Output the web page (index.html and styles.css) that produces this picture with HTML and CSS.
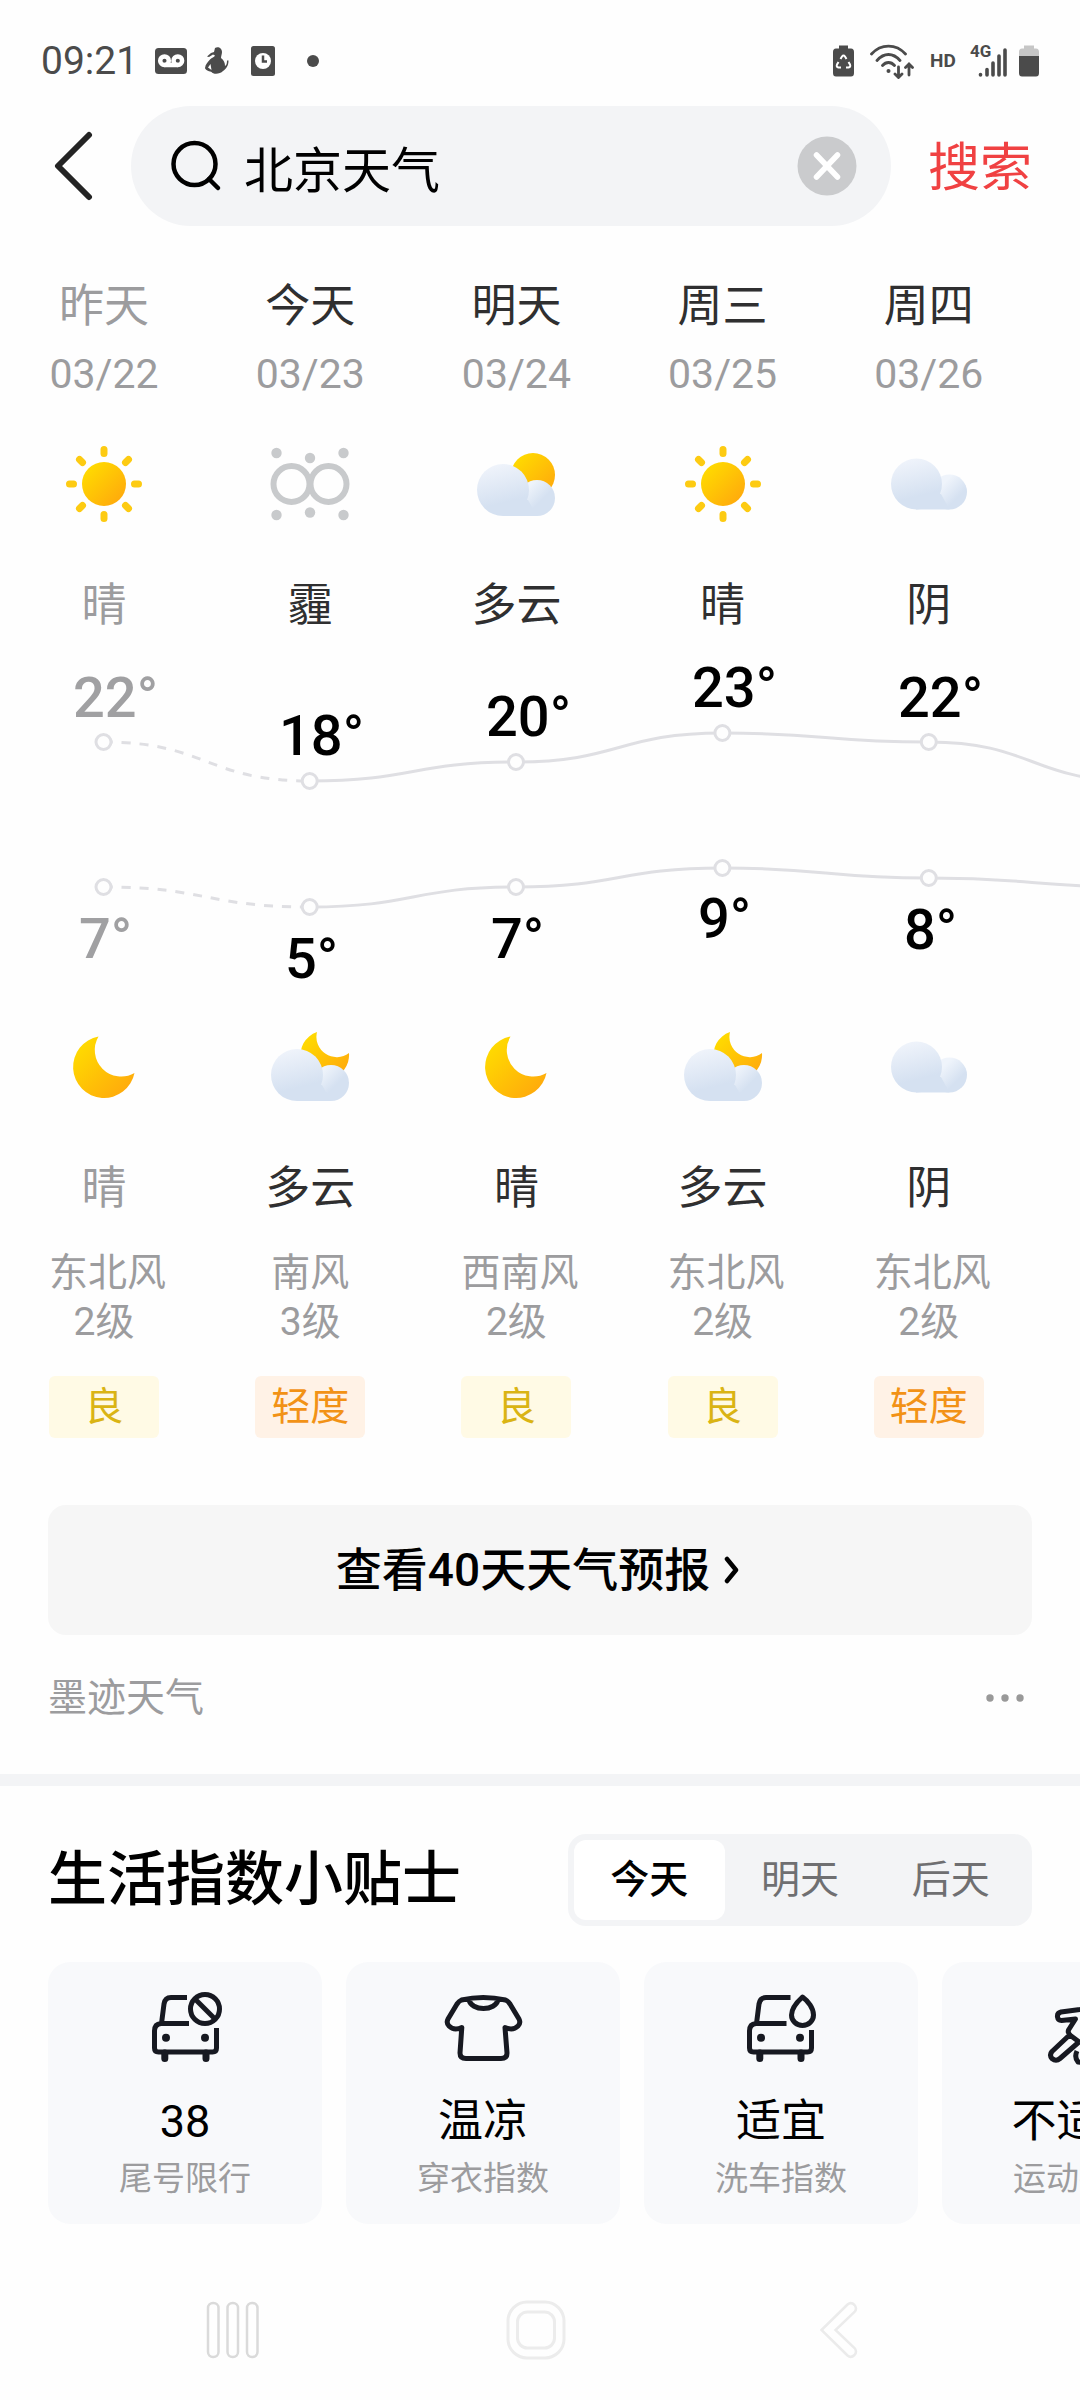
FILE: index.html
```html
<!DOCTYPE html>
<html lang="zh-CN">
<head>
<meta charset="utf-8">
<meta name="viewport" content="width=device-width, initial-scale=1">
<title>北京天气</title>
<link rel="stylesheet" href="styles.css">
</head>
<body>

<svg class="defs" aria-hidden="true">
  <defs>
    <linearGradient id="gold" x1="0" y1="0" x2="1" y2="1">
      <stop offset="0.1" stop-color="#ffdc00"/>
      <stop offset="0.95" stop-color="#ffa60d"/>
    </linearGradient>
    <linearGradient id="puff" x1="0.3" y1="0" x2="0.55" y2="1">
      <stop offset="0" stop-color="#f0f4fb"/>
      <stop offset="0.75" stop-color="#d5e1f1"/>
    </linearGradient>
    <linearGradient id="puff-small" gradientUnits="userSpaceOnUse" x1="52" y1="42" x2="66" y2="56">
      <stop offset="0" stop-color="#eff4fb"/>
      <stop offset="1" stop-color="#d5e1f1"/>
    </linearGradient>

    <symbol id="sun" viewBox="0 0 80 80">
      <circle cx="40" cy="40" r="22" fill="url(#gold)"/>
      <g stroke="#fdcb12" stroke-width="7" stroke-linecap="round">
        <path d="M40 5.500V9.500M40 70.500V74.500M5.500 40H9.500M70.500 40H74.500M15.500 15.500L18.500 18.500M61.500 61.500L64.500 64.500M64.500 15.500L61.500 18.500M18.500 61.500L15.500 64.500"/>
      </g>
    </symbol>

    <symbol id="haze" viewBox="0 0 80 80">
      <g fill="none" stroke="#c8cacc" stroke-width="6">
        <circle cx="21.500" cy="40" r="18"/>
        <circle cx="58.500" cy="40" r="18"/>
      </g>
      <g fill="#c8cacc">
        <circle cx="6.500" cy="9" r="5.200"/><circle cx="40" cy="14" r="5.200"/><circle cx="73.500" cy="9" r="5.200"/>
        <circle cx="6.500" cy="71" r="5.200"/><circle cx="40" cy="68.500" r="5.200"/><circle cx="73.500" cy="71" r="5.200"/>
      </g>
    </symbol>

    <symbol id="cloud" viewBox="0 0 80 80">
      <circle cx="60.500" cy="48" r="17.500" fill="url(#puff-small)"/>
      <path d="M27 50H52L60.500 65.500H27Z" fill="#d5e1f1"/>
      <circle cx="27.500" cy="40" r="25.500" fill="url(#puff)"/>
    </symbol>

    <symbol id="cloudy-puffs" viewBox="0 0 80 80">
      <circle cx="61" cy="54" r="18" fill="url(#puff-small)"/>
      <path d="M27 56H52L61 72H27Z" fill="#d5e1f1"/>
      <circle cx="27" cy="46" r="26" fill="url(#puff)"/>
    </symbol>

    <symbol id="cloudy-day" viewBox="0 0 80 80">
      <circle cx="57" cy="31" r="22" fill="url(#gold)"/>
      <use href="#cloudy-puffs" width="80" height="80"/>
    </symbol>

    <symbol id="moon" viewBox="0 0 80 80">
      <path d="M34.500 9.500A31 31 0 1 0 70.500 46A26.500 26.500 0 0 1 34.500 9.500Z" fill="url(#gold)"/>
    </symbol>

    <symbol id="cloudy-night" viewBox="0 0 80 80">
      <path d="M47 5A24.300 24.300 0 1 0 79 26A20.300 20.300 0 0 1 47 5Z" fill="url(#gold)"/>
      <use href="#cloudy-puffs" y="2" width="80" height="80"/>
    </symbol>
  </defs>
</svg>

<header class="status">
  <div class="status-left">
    <time class="clock">09:21</time>
    <svg class="status-icon" viewBox="0 0 32 32" aria-hidden="true">
      <rect x="0" y="3" width="32" height="26" rx="3.500" fill="#4b4b4b"/>
      <g fill="none" stroke="#fff" stroke-width="4.500"><circle cx="9.500" cy="15.700" r="4.300"/><circle cx="22.800" cy="15.700" r="4.300"/><path d="M9.500 20H22.800"/></g>
    </svg>
    <svg class="status-icon" viewBox="0 0 32 32" aria-hidden="true">
      <path d="M14 3C17 1 21 3 21 7C21 9 20 11 20 13C23 15 24 18 24 21C26 20 26 17 26 15.500H27.500C27.500 21 25 24 22 26C19 29.500 12 29.500 10.500 27C7 26 4 24.500 4 23C4.500 19 7 17 9 14.500C11 12.500 13 12.500 14 10.500L12 9.500L8 12L6 11.500L10 8L13 7ZM9.500 19L7 22.500L10.500 25Z" fill="#4b4b4b"/>
    </svg>
    <svg class="status-icon" viewBox="0 0 32 32" aria-hidden="true">
      <rect x="4" y="1" width="24" height="30" rx="2.500" fill="#4b4b4b"/>
      <circle cx="16" cy="16" r="8" fill="#fff"/><path d="M16 10.500V16.500H20" fill="none" stroke="#4b4b4b" stroke-width="2.500"/>
    </svg>
    <svg class="status-icon" viewBox="0 0 32 32" aria-hidden="true"><circle cx="20" cy="16" r="6" fill="#4b4b4b"/></svg>
  </div>
  <div class="status-right">
    <svg class="status-saver" viewBox="0 0 25 32" aria-hidden="true">
      <path d="M6 0.500H15V3.500H18Q21 3.500 21 7V28Q21 31.500 18 31.500H3Q0 31.500 0 28V7Q0 3.500 3 3.500H6Z" fill="#4b4b4b"/>
      <path d="M7.500 14L9 11.500Q10.500 9.500 12 11.500L13.500 14M15.500 17L17 19.500Q18 22 15.500 22.500H13M8 22.500H5.500Q3 22 4 19.500L5.500 17" fill="none" stroke="#fff" stroke-width="2"/>
    </svg>
    <svg class="status-wifi" viewBox="0 0 48 36" aria-hidden="true">
      <g fill="none" stroke="#4b4b4b" stroke-width="2.800" stroke-linecap="round">
        <path d="M1.500 11C11 0.500 26 0.500 35.500 11M7 17.500C14 9.500 23 9.500 30 17.500M12.500 22.500C16 18.500 21 18.500 24.500 22.500"/>
        <path d="M28.500 24V34M25 31L28.500 34.500L32 31M39 32V22M35.500 24.500L39 21L42.500 24.500"/>
      </g>
      <circle cx="18.500" cy="28" r="2" fill="#4b4b4b"/>
    </svg>
    <span class="status-hd">HD</span>
    <svg class="status-signal" viewBox="0 0 37 34" aria-label="4G">
      <text class="signal-label" x="0" y="13">4G</text>
      <path d="M10.500 31V30.500M17 31V25.500M23 31V19M29 31V12M35 31V6" stroke="#4b4b4b" stroke-width="3.600" stroke-linecap="round"/>
    </svg>
    <svg class="status-battery" viewBox="0 0 20 32" aria-hidden="true">
      <path d="M5 0.500H15V3.500H17Q20 3.500 20 7V11H0V7Q0 3.500 3 3.500H5Z" fill="#c6c6c6"/>
      <path d="M0 11H20V28Q20 31.500 17 31.500H3Q0 31.500 0 28Z" fill="#4b4b4b"/>
    </svg>
  </div>
</header>

<form class="search" role="search">
  <button class="back" type="button" aria-label="返回">
    <svg viewBox="0 0 40 72" width="40" height="72"><path d="M36 5L5 36L36 67" fill="none" stroke="#242424" stroke-width="6" stroke-linecap="round" stroke-linejoin="round"/></svg>
  </button>
  <div class="field">
    <svg viewBox="0 0 52 54" width="52" height="54" aria-hidden="true"><g fill="none" stroke="#000" stroke-width="4.500" stroke-linecap="round"><circle cx="24.500" cy="25" r="21"/><path d="M39 40L48 49"/></g></svg>
    <input class="query" type="text" value="北京天气" aria-label="搜索内容">
    <button class="clear" type="button" aria-label="清空">
      <svg viewBox="0 0 60 60" width="60" height="60"><circle cx="30" cy="30" r="29.500" fill="#cacbcd"/><path d="M19.500 19L40.500 41M40.500 19L19.500 41" stroke="#fff" stroke-width="5.500" stroke-linecap="round"/></svg>
    </button>
  </div>
  <button class="submit" type="submit">搜索</button>
</form>

<main>
  <section class="forecast" aria-label="天气预报">
    <ul class="days">
      <li class="day past"><p class="name">昨天</p><p class="date">03/22</p><svg class="sky"><use href="#sun"/></svg><p class="name">晴</p></li>
      <li class="day"><p class="name">今天</p><p class="date">03/23</p><svg class="sky"><use href="#haze"/></svg><p class="name">霾</p></li>
      <li class="day"><p class="name">明天</p><p class="date">03/24</p><svg class="sky"><use href="#cloudy-day"/></svg><p class="name">多云</p></li>
      <li class="day"><p class="name">周三</p><p class="date">03/25</p><svg class="sky"><use href="#sun"/></svg><p class="name">晴</p></li>
      <li class="day"><p class="name">周四</p><p class="date">03/26</p><svg class="sky"><use href="#cloud"/></svg><p class="name">阴</p></li>
    </ul>

    <svg class="chart" viewBox="0 636 1080 391" role="img" aria-label="最高与最低气温曲线">
      <g class="line">
        <path class="dashed" d="M103.500 742C206.500 742 206.500 781 309.700 781"/>
        <path d="M309.700 781C413 781 413 762 516 762C619 762 619 733 722.400 733C825.500 733 825.500 742 928.800 742C1032 742 1032 781 1135 781"/>
        <path class="dashed" d="M103.500 887C206.500 887 206.500 907 309.700 907"/>
        <path d="M309.700 907C413 907 413 887 516 887C619 887 619 868 722.400 868C825.500 868 825.500 878 928.800 878C1032 878 1032 887 1135 887"/>
      </g>
      <g class="dots">
        <circle cx="103.500" cy="742" r="7.500"/><circle cx="309.700" cy="781" r="7.500"/><circle cx="516" cy="762" r="7.500"/><circle cx="722.400" cy="733" r="7.500"/><circle cx="928.800" cy="742" r="7.500"/>
        <circle cx="103.500" cy="887" r="7.500"/><circle cx="309.700" cy="907" r="7.500"/><circle cx="516" cy="887" r="7.500"/><circle cx="722.400" cy="868" r="7.500"/><circle cx="928.800" cy="878" r="7.500"/>
      </g>
      <g class="temps">
        <text class="past" x="73" y="717">22°</text><text x="279" y="755">18°</text><text x="486" y="736">20°</text><text x="692" y="707">23°</text><text x="898" y="717">22°</text>
        <text class="past" x="79" y="958">7°</text><text x="285" y="978">5°</text><text x="491" y="958">7°</text><text x="698" y="938">9°</text><text x="904" y="949">8°</text>
      </g>
    </svg>

    <ul class="days">
      <li class="day past"><svg class="sky"><use href="#moon"/></svg><p class="name">晴</p><p class="wind">东北风<br>2级</p><p class="badge good">良</p></li>
      <li class="day"><svg class="sky"><use href="#cloudy-night"/></svg><p class="name">多云</p><p class="wind">南风<br>3级</p><p class="badge light">轻度</p></li>
      <li class="day"><svg class="sky"><use href="#moon"/></svg><p class="name">晴</p><p class="wind">西南风<br>2级</p><p class="badge good">良</p></li>
      <li class="day"><svg class="sky"><use href="#cloudy-night"/></svg><p class="name">多云</p><p class="wind">东北风<br>2级</p><p class="badge good">良</p></li>
      <li class="day"><svg class="sky"><use href="#cloud"/></svg><p class="name">阴</p><p class="wind">东北风<br>2级</p><p class="badge light">轻度</p></li>
    </ul>

    <a class="more" href="#forecast40">
      <span>查看40天天气预报</span>
      <svg viewBox="0 0 20 30" width="20" height="30" aria-hidden="true"><path d="M3 4L12 15L3 26" fill="none" stroke="#000" stroke-width="4.500" stroke-linecap="round" stroke-linejoin="round"/></svg>
    </a>

    <div class="source">
      <span>墨迹天气</span>
      <button class="dots-menu" type="button" aria-label="更多">
        <svg viewBox="0 0 40 12" width="40" height="12"><g fill="#999"><circle cx="4" cy="6" r="3.700"/><circle cx="19" cy="6" r="3.700"/><circle cx="34" cy="6" r="3.700"/></g></svg>
      </button>
    </div>
  </section>

  <section class="tips">
    <div class="tips-head">
      <h2>生活指数小贴士</h2>
      <div class="segments">
        <button class="segment active" type="button" aria-pressed="true">今天</button>
        <button class="segment" type="button" aria-pressed="false">明天</button>
        <button class="segment" type="button" aria-pressed="false">后天</button>
      </div>
    </div>
    <ul class="cards">
      <li class="card">
        <svg class="glyph" viewBox="0 0 80 80" aria-hidden="true">
          <path d="M44 36.500H16Q9.500 37 9.500 44V61Q9.500 65 13.500 65H67.500Q71.500 65 71.500 61V41M16.500 36.500L19 17Q20 10.500 26 10.500H42"/>
          <path class="thick" d="M19.800 66V71.500M61 66V71.500"/>
          <circle class="solid" cx="21" cy="50.700" r="4"/><circle class="solid" cx="60" cy="50.700" r="4"/>
          <circle cx="60" cy="22" r="14.500"/><path d="M50 12L70 32"/>
        </svg>
        <strong>38</strong><span>尾号限行</span>
      </li>
      <li class="card">
        <svg class="glyph" viewBox="0 0 80 80" aria-hidden="true">
          <path d="M18.500 13Q40 8 62.500 13Q65 14 67 17L76 32Q78 36 75 39Q70 44 62 40.500L64 66Q64 71.500 58 71.500H23Q17 71.500 17 66L18.800 40.500Q11 44 6 39Q3 36 5 32L14 17Q16 14 18.500 13ZM26 12.500C28 24.500 53 24.500 55 12.500"/>
        </svg>
        <strong>温凉</strong><span>穿衣指数</span>
      </li>
      <li class="card">
        <svg class="glyph" viewBox="0 0 80 80" aria-hidden="true">
          <path d="M45.500 36.500H15Q8.500 37 8.500 44V61Q8.500 65 12.500 65H66.500Q70.500 65 70.500 61V43M15.500 36.500L18 17Q19 10.500 25 10.500H49.500"/>
          <path class="thick" d="M18.800 66V71.500M60 66V71.500"/>
          <circle class="solid" cx="20" cy="50.700" r="4"/><circle class="solid" cx="59" cy="50.700" r="4"/>
          <path d="M61.500 10C56 15 50.500 21 50.500 28A11 10.500 0 0 0 72.500 28C72.500 21 67 14 61.500 10Z"/>
        </svg>
        <strong>适宜</strong><span>洗车指数</span>
      </li>
      <li class="card">
        <svg class="glyph" viewBox="0 0 80 80" aria-hidden="true">
          <path d="M56 28C52 22.500 47 21.500 41 22.500L22 25Q18 26 18.500 30Q19 33.500 22.500 33.500L36.500 32L29.500 43Q28.500 46 31.500 48.500L41 55.500M30.500 48L13 64.500Q10 68 13 71.500Q17 75 21 71.500L40 55M38 64Q35 70 39 75L48 76L56 60L46 48L56 36"/>
          <circle cx="60" cy="12" r="7"/>
        </svg>
        <strong>不适宜</strong><span>运动指数</span>
      </li>
    </ul>
  </section>
</main>

<nav class="system" aria-label="系统导航">
  <button type="button" aria-label="最近任务"><svg viewBox="0 0 54 60" width="54" height="60"><g fill="none" stroke="#dadada" stroke-width="2.500"><rect x="2" y="3" width="10.500" height="54" rx="5"/><rect x="21.500" y="3" width="10.500" height="54" rx="5"/><rect x="41" y="3" width="10.500" height="54" rx="5"/></g></svg></button>
  <button type="button" aria-label="主屏幕"><svg viewBox="0 0 60 60" width="60" height="60"><g fill="none" stroke="#ececec" stroke-width="3"><rect x="2" y="2" width="56" height="56" rx="19"/><rect x="11.500" y="12" width="37" height="36" rx="10"/></g></svg></button>
  <button type="button" aria-label="后退"><svg viewBox="0 0 40 60" width="40" height="60"><path d="M2.500 30L28.500 4.500Q32 1.500 35.500 5Q38.500 8.500 35.500 12L16.500 30L35.500 48Q38.500 51.500 35.500 55Q32 58.500 28.500 55.500Z" fill="none" stroke="#ebebeb" stroke-width="2.500"/></svg></button>
</nav>

</body>
</html>
```
FILE: styles.css
```css
* { box-sizing: border-box; }

body {
  margin: 0;
  background: #fefefe;
  color: #000;
  font-family: Roboto, "Noto Sans CJK SC", sans-serif;
  font-size: 39px;
  overflow-x: hidden;
}

ul, p, h2 { margin: 0; padding: 0; list-style: none; }

button {
  padding: 0;
  border: 0;
  background: none;
  color: inherit;
  font: inherit;
}

svg { display: block; flex: none; }

.defs { position: absolute; width: 0; height: 0; }

/* Status bar */
.status {
  display: flex;
  justify-content: space-between;
  padding: 38px 41px 22px;
  color: #4b4b4b;
}
.status-left, .status-right { display: flex; align-items: center; height: 46px; }
.status-left { gap: 14px; }
.status-right { gap: 12px; }
.clock { width: 100px; font-size: 39px; line-height: 46px; }
.status-icon { width: 32px; height: 32px; }
.status-saver { width: 25px; height: 32px; }
.status-wifi { width: 48px; height: 36px; }
.status-hd { width: 28px; font-size: 19px; font-weight: 700; line-height: 24px; }
.status-signal { width: 37px; height: 34px; overflow: visible; }
.signal-label { font-size: 17px; font-weight: 700; fill: #4b4b4b; }
.status-battery { width: 20px; height: 32px; }

/* Search bar */
.search { display: flex; align-items: center; padding: 0 48px 0 53px; }
.back { margin-right: 38px; }
.field {
  display: flex;
  flex: 1;
  align-items: center;
  min-width: 0;
  height: 120px;
  padding: 0 34px 0 39px;
  border-radius: 60px;
  background: #f3f4f6;
}
.query {
  flex: 1;
  min-width: 0;
  height: 72px;
  margin: 0 0 0 22px;
  padding: 0;
  border: 0;
  outline: 0;
  background: none;
  color: #000;
  font: inherit;
  font-size: 49px;
}
.submit { margin-left: 37px; padding-top: 6px; color: #f04142; font-size: 52px; line-height: 72px; }

/* Forecast */
.forecast { padding-top: 51px; }
.days { display: grid; grid-template-columns: repeat(5, 1fr); padding-left: 49px; }
.day { display: flex; flex-direction: column; width: 110px; text-align: center; white-space: nowrap; }
.name { color: #2f2f30; font-size: 45px; line-height: 60px; }
.date { margin: 12px 0 45px; color: #9c9c9e; font-size: 41px; line-height: 50px; }
.sky { align-self: center; width: 80px; height: 80px; margin-bottom: 52px; }
.past .name { color: #9c9c9e; }
.wind { margin: 30px 0 29px; color: #9c9c9e; font-size: 39px; line-height: 49px; }
.badge { border-radius: 6px; font-size: 39px; line-height: 62px; }
.good { background: #fffae5; color: #dab414; }
.light { background: #fff2e6; color: #f29216; }

.chart { width: 100%; height: auto; }
.line { fill: none; stroke: #dfdfe3; stroke-width: 3; }
.dashed { stroke-dasharray: 9 9; }
.dots { fill: #fefefe; stroke: #dfdfe3; stroke-width: 3; }
.temps { font-size: 56px; font-weight: 500; }
.temps .past { fill: #a0a0a2; }

.more {
  display: flex;
  align-items: center;
  justify-content: center;
  gap: 14px;
  height: 130px;
  margin: 67px 48px 38px;
  border-radius: 18px;
  background: #f6f6f6;
  color: #000;
  font-size: 46px;
  font-weight: 500;
  text-decoration: none;
}
.more span { padding-bottom: 8px; }

.source {
  display: flex;
  align-items: center;
  justify-content: space-between;
  margin: 0 54px 51px 48px;
  color: #9c9c9e;
  font-size: 39px;
  line-height: 50px;
}

/* Daily tips */
.tips { padding: 48px 0 0 48px; border-top: 12px solid #f3f4f6; }
.tips-head { display: flex; align-items: center; justify-content: space-between; margin: 0 48px 36px 0; }
.tips h2 { font-size: 59px; font-weight: 500; line-height: 72px; }
.segments {
  display: grid;
  grid-template-columns: repeat(3, 1fr);
  width: 464px;
  padding: 6px;
  border-radius: 18px;
  background: #f3f4f6;
}
.segment { height: 80px; padding-bottom: 8px; border-radius: 12px; color: #6f6f71; font-size: 39px; }
.active { background: #fff; color: #000; font-weight: 500; }

.cards { display: flex; gap: 24px; overflow: hidden; }
.card {
  display: flex;
  flex: none;
  flex-direction: column;
  align-items: center;
  width: 274px;
  height: 262px;
  padding-top: 25px;
  border-radius: 22px;
  background: #f8f9fb;
}
.glyph { width: 80px; height: 80px; fill: none; stroke: #171921; stroke-width: 5; stroke-linejoin: round; }
.glyph .thick { stroke-width: 7; stroke-linecap: round; }
.glyph .solid { fill: #171921; stroke: none; }
.card strong { margin-top: 25px; font-size: 45px; font-weight: 400; line-height: 60px; }
.card span { color: #9c9c9e; font-size: 33px; line-height: 54px; }

/* System navigation */
.system { display: grid; grid-template-columns: repeat(3, 1fr); height: 140px; margin-top: 36px; padding: 0 90px 0 82px; }
.system button { display: flex; align-items: center; justify-content: center; }
```
